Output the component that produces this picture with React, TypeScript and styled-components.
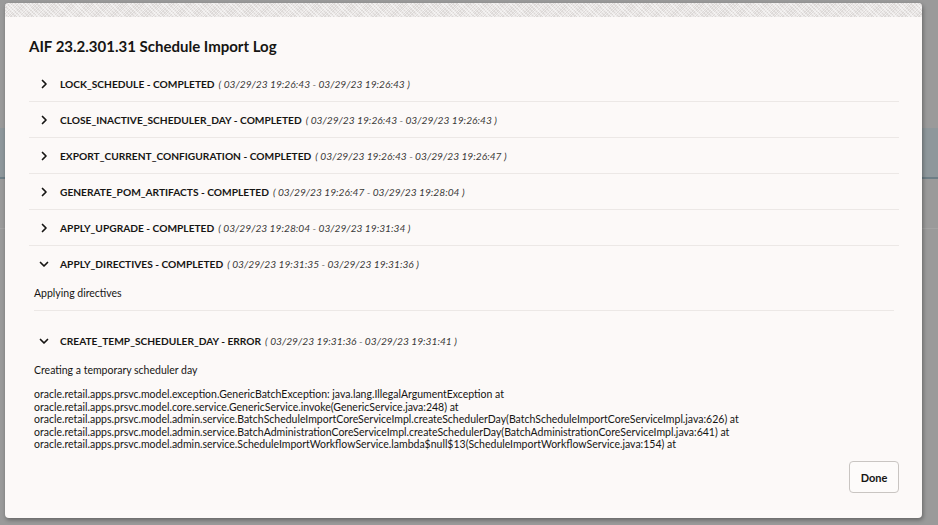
import React from 'react';
import styled, { createGlobalStyle } from 'styled-components';

const GlobalStyle = createGlobalStyle`
  html, body {
    margin: 0;
    padding: 0;
  }
  body {
    font-family: Lato, "Noto Sans", sans-serif;
    color: #161513;
  }
`;

const Backdrop = styled.div`
  width: 938px;
  height: 525px;
  box-sizing: border-box;
  padding: 3px 16px 7px 5px;
  background:
    linear-gradient(
      to bottom,
      transparent 128px,
      #8e979b 128px,
      #8e979b 177px,
      #6d7e86 177px,
      #6d7e86 179px,
      transparent 179px,
      transparent 228px,
      #a3a3a3 228px,
      #a3a3a3 229px,
      transparent 229px
    ),
    #9a9a9a;
  overflow: hidden;
`;

const Dialog = styled.div`
  height: 100%;
  display: flex;
  flex-direction: column;
  background: #fcf9f8;
  border-radius: 4px;
  box-shadow: 1px 2px 4px rgba(0, 0, 0, 0.35);
  overflow: hidden;
`;

const Texture = styled.div`
  flex: 0 0 14px;
  background:
    repeating-linear-gradient(45deg, rgba(255, 255, 255, 0.5) 0 1px, transparent 1px 3px),
    repeating-linear-gradient(-45deg, rgba(210, 206, 204, 0.6) 0 1px, transparent 1px 2px),
    #ebe8e7;
`;

const Title = styled.h1`
  margin: 0;
  padding: 20px 24px 0;
  height: 29px;
  box-sizing: content-box;
  font-size: 15px;
  font-weight: 700;
  line-height: 18px;
`;

const Body = styled.div`
  flex: 1;
  min-height: 0;
  overflow: hidden;
  padding: 0 23px 0 24px;
`;

const Section = styled.div<{ $open?: boolean }>`
  border-bottom: ${(p) => (p.$open ? 'none' : '1px solid #ece8e6')};
  margin-bottom: ${(p) => (p.$open ? '12px' : '0')};
`;

const Header = styled.div`
  height: 35px;
  display: flex;
  align-items: center;
  padding-left: 9px;
  font-size: 10.2px;
`;

const Chevron = styled.svg`
  width: 12px;
  height: 12px;
  flex: 0 0 12px;
  margin-right: 10px;
`;

const Name = styled.span`
  font-weight: 700;
  text-transform: uppercase;
`;

const Dates = styled.span`
  font-style: italic;
  color: #3b3a38;
  margin-left: 4px;
`;

const Content = styled.div<{ $divider?: boolean }>`
  margin: 0 5px;
  padding: 5px 0 10px;
  font-size: 10.5px;
  line-height: 14px;
  border-bottom: ${(p) => (p.$divider ? '1px solid #ece8e6' : 'none')};
`;

const Trace = styled.div`
  margin-top: 11px;
  font-size: 10.5px;
  line-height: 12.5px;
  white-space: nowrap;
`;

const Footer = styled.div`
  display: flex;
  justify-content: flex-end;
  padding: 11px 23px 25px;
`;

const Button = styled.button`
  width: 50px;
  height: 32px;
  border: 1px solid #c9c5c2;
  border-radius: 4px;
  background: #fdfbfa;
  font-family: inherit;
  font-size: 11px;
  font-weight: 700;
  color: #161513;
`;

const steps = [
  ['LOCK_SCHEDULE - COMPLETED', '03/29/23 19:26:43 - 03/29/23 19:26:43'],
  ['CLOSE_INACTIVE_SCHEDULER_DAY - COMPLETED', '03/29/23 19:26:43 - 03/29/23 19:26:43'],
  ['EXPORT_CURRENT_CONFIGURATION - COMPLETED', '03/29/23 19:26:43 - 03/29/23 19:26:47'],
  ['GENERATE_POM_ARTIFACTS - COMPLETED', '03/29/23 19:26:47 - 03/29/23 19:28:04'],
  ['APPLY_UPGRADE - COMPLETED', '03/29/23 19:28:04 - 03/29/23 19:31:34'],
];

const trace = [
  'oracle.retail.apps.prsvc.model.exception.GenericBatchException: java.lang.IllegalArgumentException at',
  'oracle.retail.apps.prsvc.model.core.service.GenericService.invoke(GenericService.java:248) at',
  'oracle.retail.apps.prsvc.model.admin.service.BatchScheduleImportCoreServiceImpl.createSchedulerDay(BatchScheduleImportCoreServiceImpl.java:626) at',
  'oracle.retail.apps.prsvc.model.admin.service.BatchAdministrationCoreServiceImpl.createSchedulerDay(BatchAdministrationCoreServiceImpl.java:641) at',
  'oracle.retail.apps.prsvc.model.admin.service.ScheduleImportWorkflowService.lambda$null$13(ScheduleImportWorkflowService.java:154) at',
];

const Arrow = ({ open }: { open?: boolean }) => (
  <Chevron viewBox="0 0 12 12" fill="none" stroke="#161513" strokeWidth="1.7" strokeLinecap="round" strokeLinejoin="round">
    {open ? <path d="M2.5 4.5 6 8l3.5-3.5" /> : <path d="M4.5 2.5 8 6 4.5 9.5" />}
  </Chevron>
);

const StepHeader = ({ name, dates, open }: { name: string; dates: string; open?: boolean }) => (
  <Header>
    <Arrow open={open} />
    <Name>{name}</Name>
    <Dates>( {dates} )</Dates>
  </Header>
);

export default function App() {
  return (
    <>
      <GlobalStyle />
      <Backdrop>
        <Dialog>
          <Texture />
          <Title>AIF 23.2.301.31 Schedule Import Log</Title>
          <Body>
            {steps.map(([name, dates]) => (
              <Section key={name}>
                <StepHeader name={name} dates={dates} />
              </Section>
            ))}
            <Section $open>
              <StepHeader name="APPLY_DIRECTIVES - COMPLETED" dates="03/29/23 19:31:35 - 03/29/23 19:31:36" open />
              <Content $divider>Applying directives</Content>
            </Section>
            <Section $open>
              <StepHeader name="CREATE_TEMP_SCHEDULER_DAY - ERROR" dates="03/29/23 19:31:36 - 03/29/23 19:31:41" open />
              <Content>
                Creating a temporary scheduler day
                <Trace>
                  {trace.map((line) => (
                    <div key={line}>{line}</div>
                  ))}
                </Trace>
              </Content>
            </Section>
          </Body>
          <Footer>
            <Button>Done</Button>
          </Footer>
        </Dialog>
      </Backdrop>
    </>
  );
}
